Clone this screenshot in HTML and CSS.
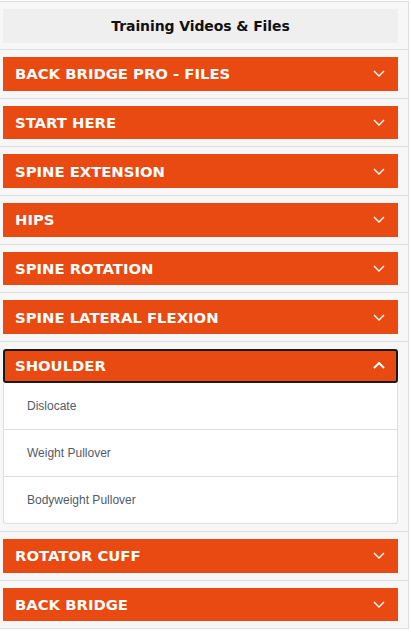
FILE: index.html
```html
<!DOCTYPE html>
<html>
<head>
<meta charset="utf-8">
<link rel="stylesheet" href="styles.css">
</head>
<body>
<div class="panel">
  <div class="item head">
    <div class="title-box">Training Videos &amp; Files</div>
  </div>
  <div class="item"><div class="bar"><span class="label">BACK BRIDGE PRO - FILES</span><svg class="chev" viewBox="0 0 12 7"><path d="M1 1 L6 6 L11 1"/></svg></div></div>
  <div class="item"><div class="bar"><span class="label">START HERE</span><svg class="chev" viewBox="0 0 12 7"><path d="M1 1 L6 6 L11 1"/></svg></div></div>
  <div class="item"><div class="bar"><span class="label">SPINE EXTENSION</span><svg class="chev" viewBox="0 0 12 7"><path d="M1 1 L6 6 L11 1"/></svg></div></div>
  <div class="item"><div class="bar"><span class="label">HIPS</span><svg class="chev" viewBox="0 0 12 7"><path d="M1 1 L6 6 L11 1"/></svg></div></div>
  <div class="item"><div class="bar"><span class="label">SPINE ROTATION</span><svg class="chev" viewBox="0 0 12 7"><path d="M1 1 L6 6 L11 1"/></svg></div></div>
  <div class="item"><div class="bar"><span class="label">SPINE LATERAL FLEXION</span><svg class="chev" viewBox="0 0 12 7"><path d="M1 1 L6 6 L11 1"/></svg></div></div>
  <div class="item">
    <div class="bar open"><span class="label">SHOULDER</span><svg class="chev" viewBox="0 0 12 7"><path d="M1 6 L6 1 L11 6"/></svg></div>
    <div class="sublist">
      <div class="subitem">Dislocate</div>
      <div class="subitem">Weight Pullover</div>
      <div class="subitem">Bodyweight Pullover</div>
    </div>
  </div>
  <div class="item"><div class="bar"><span class="label">ROTATOR CUFF</span><svg class="chev" viewBox="0 0 12 7"><path d="M1 1 L6 6 L11 1"/></svg></div></div>
  <div class="item"><div class="bar"><span class="label">BACK BRIDGE</span><svg class="chev" viewBox="0 0 12 7"><path d="M1 1 L6 6 L11 1"/></svg></div></div>
</div>
</body>
</html>
```

FILE: styles.css
```css
html, body {
  margin: 0;
  padding: 0;
  background: #ffffff;
}
.panel {
  margin-top: 1px;
  width: 408px;
  background: #f7f7f7;
  border-top: 1px solid #dedede;
  border-right: 1px solid #dedede;
  border-bottom: 1px solid #dedede;
}
.item {
  padding: 7px 10px 7px 3px;
  border-bottom: 1px solid #dedede;
}
.item.head {
  padding-bottom: 6px;
}
.item:last-child {
  border-bottom: none;
}
.title-box {
  height: 34px;
  background: #efefef;
  display: flex;
  align-items: center;
  justify-content: center;
  font-family: "DejaVu Sans", sans-serif;
  font-weight: bold;
  font-size: 14px;
  letter-spacing: -0.1px;
  color: #111;
}
.bar {
  box-sizing: border-box;
  height: 33.7px;
  background: #e84a12;
  display: flex;
  align-items: center;
  justify-content: space-between;
  padding: 0 13px 0 12px;
}
.bar.open {
  border: 2px solid #1a1a1a;
  border-radius: 3px;
  padding: 0 11px 0 10px;
}
.label {
  font-family: "DejaVu Sans", sans-serif;
  font-weight: bold;
  font-size: 14.8px;
  color: #ffffff;
}
.chev {
  width: 12px;
  height: 7px;
  fill: none;
  stroke: #ffffff;
  stroke-width: 1.4;
}
.bar.open .chev {
  stroke-width: 2;
}
.sublist {
  background: #ffffff;
  border: 1px solid #dedede;
  border-top: none;
  border-radius: 0 0 3px 3px;
}
.subitem {
  height: 46px;
  display: flex;
  align-items: center;
  padding-left: 23px;
  font-family: "Liberation Sans", Arial, sans-serif;
  font-size: 12px;
  color: #525b69;
  border-bottom: 1px solid #dedede;
}
.subitem:last-child {
  border-bottom: none;
}
```
